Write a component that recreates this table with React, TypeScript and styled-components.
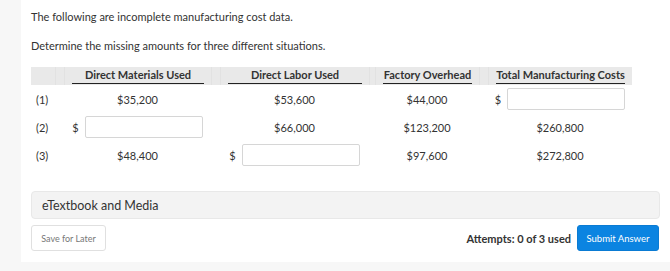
import React from "react";
import styled, { createGlobalStyle } from "styled-components";

const Global = createGlobalStyle`
  html, body { margin: 0; padding: 0; background: #f7f7f7; }
  body { font-family: Lato, "Open Sans", sans-serif; color: #333; }
`;

const Panel = styled.div`
  margin-left: 21px;
  width: 649px;
  height: 262px;
  box-sizing: border-box;
  padding: 9px 10px 0 10px;
  background: #fff;
  display: flex;
  flex-direction: column;
`;

const Para = styled.p`
  margin: 0 0 13px 0;
  font-size: 11px;
  line-height: 16px;
  color: #333;
`;

const COLS = "24px 9px 147px 9px 149px 6px 104px 9px 144px";

const Table = styled.div`
  width: 601px;
  display: grid;
  grid-template-columns: ${COLS};
`;

const HeadCell = styled.div<{ $divider?: boolean }>`
  background: #e9e9e9;
  height: 18px;
  padding: 0 7px;
  box-sizing: border-box;
  border-left: ${(p) => (p.$divider ? "1px solid #e2e2e2" : "none")};
`;

const HeadLabel = styled.div`
  font-size: 11px;
  font-weight: 700;
  line-height: 16px;
  text-align: center;
  border-bottom: 1px solid #222;
  white-space: nowrap;
`;

const Cell = styled.div<{ $align?: "left" | "center" }>`
  height: 28px;
  display: flex;
  align-items: center;
  justify-content: ${(p) => (p.$align === "left" ? "flex-start" : "center")};
  padding-left: ${(p) => (p.$align === "left" ? "5px" : "0")};
  font-size: 11px;
  color: #333;
  white-space: nowrap;
`;

const Dollar = styled.span`
  font-size: 11px;
  margin-right: 6px;
`;

const Input = styled.input`
  width: 118px;
  height: 22px;
  box-sizing: border-box;
  border: 1px solid #d6d6d6;
  border-radius: 2px;
  background: #fff;
  padding: 0 4px;
  font-family: inherit;
  font-size: 11px;
  outline: none;
`;

const Media = styled.div`
  margin-top: 22px;
  width: 629px;
  height: 28px;
  box-sizing: border-box;
  background: #f3f3f3;
  border: 1px solid #e8e8e8;
  border-radius: 4px;
  display: flex;
  align-items: center;
  padding-left: 10px;
  font-size: 12.5px;
  color: #333;
`;

const Footer = styled.div`
  margin-top: 6px;
  width: 628px;
  display: flex;
  align-items: center;
`;

const SaveButton = styled.button`
  height: 26px;
  width: 75px;
  box-sizing: border-box;
  background: #fff;
  border: 1px solid #e0e0e0;
  border-radius: 3px;
  font-family: inherit;
  font-size: 9px;
  color: #777;
  padding: 0;
`;

const Attempts = styled.span`
  margin-left: auto;
  margin-right: 6px;
  font-size: 11px;
  font-weight: 700;
  color: #333;
`;

const SubmitButton = styled.button`
  height: 26px;
  width: 82px;
  box-sizing: border-box;
  background: #0b84e1;
  border: 1px solid #0a7bd3;
  border-radius: 3px;
  font-family: inherit;
  font-size: 9.5px;
  color: #fff;
  padding: 0;
`;

type Val = string | null;
const rows: { label: string; m: Val; l: Val; f: Val; t: Val }[] = [
  { label: "(1)", m: "$35,200", l: "$53,600", f: "$44,000", t: null },
  { label: "(2)", m: null, l: "$66,000", f: "$123,200", t: "$260,800" },
  { label: "(3)", m: "$48,400", l: null, f: "$97,600", t: "$272,800" },
];

const ValueCell = ({ v }: { v: Val }) =>
  v === null ? (
    <Cell>
      <Dollar>$</Dollar>
      <Input type="text" />
    </Cell>
  ) : (
    <Cell>{v}</Cell>
  );

export default function App() {
  return (
    <>
      <Global />
      <Panel>
        <Para>The following are incomplete manufacturing cost data.</Para>
        <Para>Determine the missing amounts for three different situations.</Para>
        <Table>
          <HeadCell />
          <HeadCell $divider />
          <HeadCell $divider>
            <HeadLabel>Direct Materials Used</HeadLabel>
          </HeadCell>
          <HeadCell $divider />
          <HeadCell $divider>
            <HeadLabel>Direct Labor Used</HeadLabel>
          </HeadCell>
          <HeadCell $divider />
          <HeadCell $divider>
            <HeadLabel>Factory Overhead</HeadLabel>
          </HeadCell>
          <HeadCell $divider />
          <HeadCell $divider>
            <HeadLabel>Total Manufacturing Costs</HeadLabel>
          </HeadCell>
          {rows.map((r) => (
            <React.Fragment key={r.label}>
              <Cell $align="left">{r.label}</Cell>
              <Cell />
              <ValueCell v={r.m} />
              <Cell />
              <ValueCell v={r.l} />
              <Cell />
              <ValueCell v={r.f} />
              <Cell />
              <ValueCell v={r.t} />
            </React.Fragment>
          ))}
        </Table>
        <Media>eTextbook and Media</Media>
        <Footer>
          <SaveButton>Save for Later</SaveButton>
          <Attempts>Attempts: 0 of 3 used</Attempts>
          <SubmitButton>Submit Answer</SubmitButton>
        </Footer>
      </Panel>
    </>
  );
}
